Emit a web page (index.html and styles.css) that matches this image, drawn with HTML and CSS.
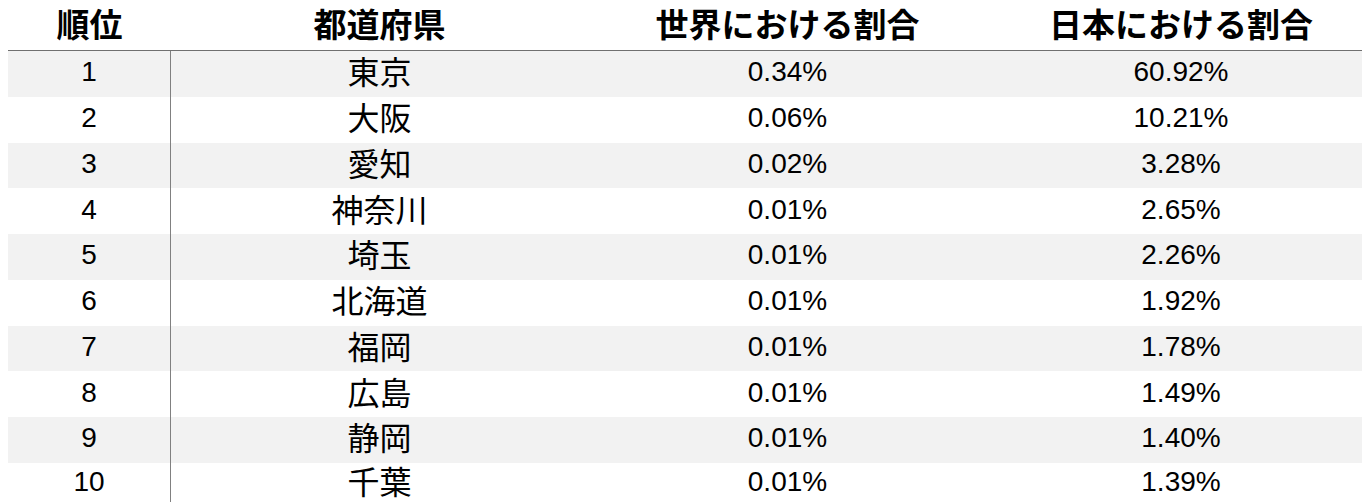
FILE: index.html
```html
<!DOCTYPE html>
<html lang="ja">
<head>
<meta charset="utf-8">
<title>都道府県別割合</title>
<link rel="stylesheet" href="styles.css">
</head>
<body>
<div class="table">
  <div class="row head">
    <div class="cell c1">順位</div>
    <div class="cell c2">都道府県</div>
    <div class="cell c3">世界における割合</div>
    <div class="cell c4">日本における割合</div>
  </div>
  <div class="row shade"><div class="cell c1 num">1</div><div class="cell c2 jp">東京</div><div class="cell c3 num">0.34%</div><div class="cell c4 num">60.92%</div></div>
  <div class="row"><div class="cell c1 num">2</div><div class="cell c2 jp">大阪</div><div class="cell c3 num">0.06%</div><div class="cell c4 num">10.21%</div></div>
  <div class="row shade"><div class="cell c1 num">3</div><div class="cell c2 jp">愛知</div><div class="cell c3 num">0.02%</div><div class="cell c4 num">3.28%</div></div>
  <div class="row"><div class="cell c1 num">4</div><div class="cell c2 jp">神奈川</div><div class="cell c3 num">0.01%</div><div class="cell c4 num">2.65%</div></div>
  <div class="row shade"><div class="cell c1 num">5</div><div class="cell c2 jp">埼玉</div><div class="cell c3 num">0.01%</div><div class="cell c4 num">2.26%</div></div>
  <div class="row"><div class="cell c1 num">6</div><div class="cell c2 jp">北海道</div><div class="cell c3 num">0.01%</div><div class="cell c4 num">1.92%</div></div>
  <div class="row shade"><div class="cell c1 num">7</div><div class="cell c2 jp">福岡</div><div class="cell c3 num">0.01%</div><div class="cell c4 num">1.78%</div></div>
  <div class="row"><div class="cell c1 num">8</div><div class="cell c2 jp">広島</div><div class="cell c3 num">0.01%</div><div class="cell c4 num">1.49%</div></div>
  <div class="row shade"><div class="cell c1 num">9</div><div class="cell c2 jp">静岡</div><div class="cell c3 num">0.01%</div><div class="cell c4 num">1.40%</div></div>
  <div class="row last"><div class="cell c1 num">10</div><div class="cell c2 jp">千葉</div><div class="cell c3 num">0.01%</div><div class="cell c4 num">1.39%</div></div>
</div>
</body>
</html>
```
FILE: styles.css
```css
html, body {
  margin: 0;
  padding: 0;
  background: #ffffff;
  overflow: hidden;
}

body {
  height: 503px;
  font-family: "Liberation Sans", "Noto Sans CJK JP", sans-serif;
  color: #000000;
}

.table {
  margin: 0 6px 0 8px;
  width: 1354px;
  height: 503px;
  overflow: hidden;
}

.row {
  display: grid;
  grid-template-columns: 163px 417px 399px 375px;
  height: 45.75px;
  background: #ffffff;
}

.row.shade {
  background: #f2f2f2;
}

.row.last {
  height: 39.25px;
}

.row.head {
  height: 50px;
  border-bottom: 1px solid #707070;
  background: #ffffff;
}

.cell {
  display: flex;
  align-items: center;
  justify-content: center;
  white-space: nowrap;
  line-height: 1;
}

.head .cell {
  font-family: "Noto Sans CJK JP", sans-serif;
  font-weight: 700;
  font-size: 33px;
  padding-bottom: 4px;
}

.row:not(.head) .c1 {
  border-right: 1px solid #808080;
}

.c4 {
  padding-left: 13px;
}

.num {
  font-family: "Liberation Sans", sans-serif;
  font-size: 28px;
  padding-bottom: 3px;
}

.c4.num {
  padding-left: 13px;
}

.jp {
  font-family: "Noto Sans CJK JP", sans-serif;
  font-size: 32px;
  padding-bottom: 7px;
}

.last .num {
  padding-bottom: 0;
}

.last .jp {
  padding-bottom: 4px;
}
```
